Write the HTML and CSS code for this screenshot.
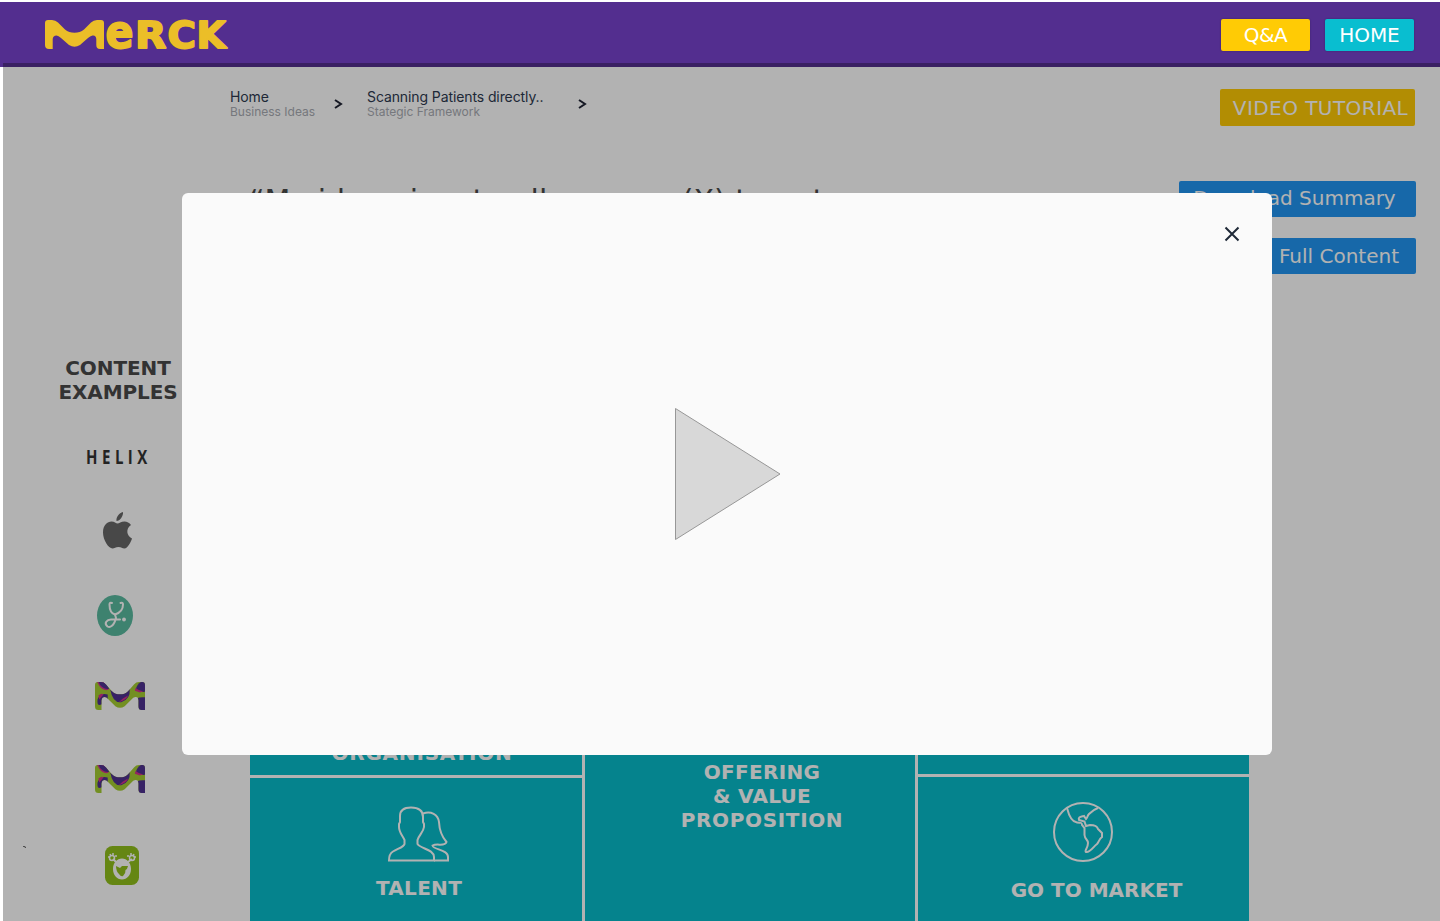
FILE: index.html
```html
<!DOCTYPE html>
<html lang="en">
<head>
<meta charset="utf-8">
<title>Merck – Strategic Framework</title>
<link rel="stylesheet" href="styles.css">
</head>
<body>
<svg class="defs" width="0" height="0" aria-hidden="true">
  <defs>
    <path id="wave" d="M0 3Q0 0 3 0H7Q10.500 0 13 2.500L20 9.500Q24 12.800 29.500 12.800Q35 12.800 39 9.500L46 2.500Q48.500 0 52 0H56Q59 0 59 3V29H55Q51.300 29 51.300 25V19Q51 15 47.500 15.500Q45 16 43 18L35 25Q29.500 28.500 24 25L16 18Q13.500 15.500 11.500 15.500Q8 15.500 7.700 19V29H4Q0 29 0 25Z"/>
    <clipPath id="wave-clip"><use href="#wave"/></clipPath>
    <symbol id="m-mark" viewBox="0 0 59 29" preserveAspectRatio="none">
      <g clip-path="url(#wave-clip)">
        <rect width="59" height="29" fill="#a5cd32"/>
        <path d="M2-1H10L16 8Q10 10 5 4Z" fill="#d4338c"/>
        <path d="M4-1H11L17 7Q11 8 6 3Z" fill="#503291"/>
        <path d="M4 16Q8 11 15 13V18L8 19V23Q2 26 3 18Z" fill="#503291"/>
        <path d="M4 14Q8 11 10 13L5 18Z" fill="#d4338c"/>
        <path d="M18 8Q31 16 41 7Q42 18 31 21Q21 22 18 8Z" fill="#503291"/>
        <path d="M28 21Q37 19 39 14L33 17Z" fill="#d4338c"/>
        <path d="M48 8Q50 0 58-1H60V10Q53 11 48 8Z" fill="#503291"/>
        <path d="M48 6Q51 9 57 9.500L53 11L47 9Z" fill="#d4338c"/>
        <path d="M49 17Q54 15 60 16V30H49Z" fill="#503291"/>
      </g>
    </symbol>
  </defs>
</svg>

<div class="page">
  <header class="topbar">
    <svg class="brand" viewBox="0 0 186 30" width="186" height="30" role="img" aria-label="Merck">
      <use href="#wave"/>
      <text class="brand-e" transform="translate(60.500 27.500) scale(.9 1)">e</text>
      <text class="brand-cap" transform="translate(90 28) scale(1.100 1)">R</text>
      <text class="brand-cap" transform="translate(122.500 27.700) scale(1.050 1)">C</text>
      <text class="brand-cap" transform="translate(151.500 28) scale(1.020 1)">K</text>
    </svg>
    <nav class="topnav">
      <a class="btn btn-qa">Q&amp;A</a>
      <a class="btn btn-home">HOME</a>
    </nav>
  </header>

  <main class="main">
    <aside class="examples">
      <h2 class="examples-title">CONTENT<br>EXAMPLES</h2>
      <div class="helix">HELIX</div>
      <svg class="apple" viewBox="0 0 29 37" width="29" height="37"><path fill="#686868" d="M20 0C20.500 4 17 9 13.500 9C13 5 16 1 20 0ZM14.500 11.500C16 11.500 18 9.500 21.500 9.500C24 9.500 26.500 10.800 28 13C22.500 16.500 23.500 24 29 26.500C28 30 24.500 36.500 21.500 36.500C19 36.500 18.500 35 15.500 35C12.500 35 11.500 36.500 9.500 36.500C5.500 36.500 0 28 0 20.500C0 13 4.500 9.500 8.500 9.500C11.500 9.500 13 11.500 14.500 11.500Z"/></svg>
      <svg class="steth" viewBox="0 0 36 41" width="36" height="41"><ellipse cx="18" cy="20.500" rx="18" ry="20.500" fill="#5abaa0"/><g fill="none" stroke="#fff" stroke-width="2" stroke-linecap="round"><path d="M15 8Q12.500 7 12.500 9.500Q12.500 18 18 19.500Q26 17 26 9.500Q26 7 23.500 8"/><path d="M18 19.500L19 23C17 31 13 33 10.500 31.500C6.500 28 10 24.500 14 24.500H23"/></g><circle cx="27" cy="24.500" r="1.900" fill="#fff"/></svg>
      <svg class="m-logo" width="50" height="28"><use href="#m-mark" width="50" height="28"/></svg>
      <svg class="m-logo m-logo-second" width="50" height="28"><use href="#m-mark" width="50" height="28"/></svg>
      <div class="last-row">
        <svg class="speck" viewBox="0 0 3 2" width="3" height="2"><path d="M0 0L3 1.500" stroke="#444"/></svg>
        <svg class="mindapp" viewBox="0 0 34 39" width="34" height="39"><rect width="34" height="39" rx="7.500" fill="#91c01c"/><path d="M8 13L11 16M27 13L23 16" stroke="#fff" stroke-width="2"/><g fill="none" stroke="#fff" stroke-width="1.500"><circle cx="7" cy="12" r="2.500"/><circle cx="27" cy="12" r="2.500"/><path d="M3 11H5M5 8L6 10M8 7V9M10 10H12M31 11H29M29 8L28 10M26 7V9M24 10H22"/></g><path fill="#fff" fill-rule="evenodd" d="M17 12.500C22 12.500 26 17 26 23C26 29 22 33.500 17 33.500C12 33.500 8 29 8 23C8 17 12 12.500 17 12.500ZM11 20Q11 25 14 28Q16 31 18 30Q21 27 20.500 24Q22.500 23 23 20L17 20L15 22Z"/></svg>
      </div>
    </aside>

    <section class="content">
      <nav class="crumbs">
        <div class="crumb crumb-first"><span class="crumb-name">Home</span><span class="crumb-sub">Business Ideas</span></div>
        <svg class="chev" viewBox="0 0 9 10" width="9" height="10"><path d="M1 1L7 5L1 9"/></svg>
        <div class="crumb crumb-second"><span class="crumb-name crumb-long">Scanning Patients directly..</span><span class="crumb-sub">Stategic Framework</span></div>
        <svg class="chev" viewBox="0 0 9 10" width="9" height="10"><path d="M1 1L7 5L1 9"/></svg>
      </nav>
      <h1 class="idea"><span>“My idea aims to allow</span> <span class="idea-who">users</span> <span>(X) to get</span></h1>
      <div class="board">
        <div class="col">
          <div class="cell cell-org">ORGANISATION</div>
          <div class="cell cell-talent">
            <svg viewBox="0 0 62 56" width="62" height="56" class="line-icon"><path d="M1 54.500C1 50 1.500 47.500 5 45.500C10 42.500 16 41 16.500 38V34C14 29 11 26 11 21V18L12 16V10C12 3 17 1.500 23 1.500C30 1.500 35 4 35 11V16L36 18V21C35.500 26 31 29 29.500 34V38C33 43 45.500 43 46 51V54.500Z"/><path d="M35 7.500C43 5 50 8 51 16C51.500 27 55 32 58.500 36C57 41 49 37 44.500 39.500C45 44 60 43 60 51V54.500H46"/></svg>
            <span class="label label-talent">TALENT</span>
          </div>
        </div>
        <div class="col">
          <div class="cell cell-offer"><span class="offer-line">OFFERING</span><span class="offer-line">&amp; VALUE</span><span class="offer-line offer-wide">PROPOSITION</span></div>
        </div>
        <div class="col">
          <div class="cell cell-blank"></div>
          <div class="cell cell-market">
            <svg viewBox="0 0 60 60" width="60" height="60" class="line-icon globe"><circle cx="30" cy="30" r="29"/><path d="M14 6C16 14 19 20 24 20.500C28 21 29 20 29 23L31.500 26V33C32 38 35 37 35 41C35 46 31 49 33 50C37 51 40 45 44 42C46 40 46 37 49 35V31L45 27C44 23 40 23 37 23L33 24L31.500 19.500L26 18C25 15 27 15 31 14L33 17C35 15 34 14 36 12C39 9 42 7 45 6"/></svg>
            <span class="label label-market">GO TO MARKET</span>
          </div>
        </div>
      </div>
    </section>

    <aside class="actions">
      <a class="btn btn-video">VIDEO TUTORIAL</a>
      <a class="btn btn-dl">Download Summary</a>
      <a class="btn btn-dl btn-full">Download Full Content</a>
    </aside>
  </main>

  <div class="scrim"></div>
  <div class="modal" role="dialog" aria-label="Video">
    <svg class="close" viewBox="0 0 16 16" width="16" height="16"><path d="M1.500 1.500L14.500 14.500M14.500 1.500L1.500 14.500"/></svg>
    <svg class="play" viewBox="0 0 106 133" width="106" height="133"><path d="M.5 .5V131.500L105 66Z"/></svg>
  </div>
</div>
</body>
</html>
```
FILE: styles.css
```css
* { box-sizing: border-box; }
body { margin: 0; background: #fff; font-family: "DejaVu Sans", sans-serif; overflow: hidden; }
.defs { position: absolute; }
.page { position: relative; height: 921px; padding-top: 2px; overflow: hidden; }

.topbar { height: 65px; background: #532e8f; display: flex; align-items: flex-start; justify-content: space-between; padding: 17px 26px 0 45px; }
.brand { margin-top: 1px; fill: #ebbe28; overflow: visible; }
.brand-e, .brand-cap { stroke: #ebbe28; stroke-width: 1.800px; stroke-linejoin: round; }
.brand-e { font: bold 46px "DejaVu Sans", sans-serif; }
.brand-cap { font: bold 37px "DejaVu Sans", sans-serif; }
.topnav { display: flex; gap: 15px; }

.btn { display: flex; align-items: center; justify-content: center; color: #fff; font-size: 20px; line-height: 24px; border-radius: 2px; white-space: nowrap; }
.btn-qa, .btn-home { width: 89px; height: 32px; box-shadow: 0 0 2px rgba(0, 0, 0, .3); }
.btn-qa { background: #ffcb05; letter-spacing: -.5px; }
.btn-home { background: #09bed0; letter-spacing: -.1px; }

.main { display: flex; height: 854px; overflow: hidden; }

.examples { width: 230px; flex: none; padding: 289px 0 0 58px; display: flex; flex-direction: column; align-items: flex-start; }
.examples-title { margin: 0; width: 120px; font-size: 20px; line-height: 24px; text-align: center; color: #4a4a4a; letter-spacing: -.1px; }
.helix { margin: 43px 0 0 28px; height: 20px; font: bold 20px/20px "Open Sans", sans-serif; letter-spacing: 6px; color: #333; transform: scaleX(.75); transform-origin: 0 0; }
.apple { margin: 45px 0 0 45px; }
.steth { margin: 46px 0 0 39px; }
.m-logo { margin: 46px 0 0 37px; }
.m-logo-second { margin-top: 55px; }
.last-row { display: flex; margin: 53px 0 0 -35px; }
.mindapp { margin-left: 79px; }

.content { width: 1019px; flex: none; padding-top: 22px; }
.crumbs { display: flex; height: 36px; font-family: Inter, sans-serif; }
.crumb { display: flex; flex-direction: column; white-space: nowrap; }
.crumb-first { width: 104px; }
.crumb-second { width: 211px; margin-left: 24px; }
.crumb-name { margin-top: -1px; font-size: 14px; line-height: 18px; color: #2e3a50; letter-spacing: -.1px; }
.crumb-sub { font-size: 12px; line-height: 12px; color: #a9acb3; }
.chev { margin-top: 10px; fill: none; stroke: #1f2333; stroke-width: 2; }
.idea { margin: 58px 0 0 19px; height: 36px; font-size: 30px; font-weight: 400; line-height: 36px; white-space: nowrap; color: #4a4a4a; }
.idea-who { letter-spacing: -1.700px; }

.board { margin: 98px 0 0 20px; display: grid; grid-template-columns: 332px 330px 331px; gap: 3px; height: 604px; }
.col { display: flex; flex-direction: column; gap: 3px; }
.cell { background: #08bccb; color: #fff; font-size: 20px; font-weight: 700; line-height: 24px; text-align: center; }
.cell-org { height: 457.500px; padding-top: 424px; padding-left: 12px; letter-spacing: .8px; }
.cell-blank { height: 456.500px; }
.cell-talent, .cell-market { flex: 1; display: flex; flex-direction: column; align-items: center; }
.cell-talent { padding: 28px 0 0 6px; }
.cell-market { padding-top: 25px; }
.cell-offer { flex: 1; padding: 443px 0 0 24px; }
.offer-line { display: block; letter-spacing: .3px; }
.offer-wide { letter-spacing: .65px; }
.line-icon { fill: none; stroke: #fff; stroke-width: 2; }
.globe { margin-right: 2px; }
.label-talent { margin-top: 14px; letter-spacing: .3px; }
.label-market { margin: 16px 0 0 26px; }

.actions { width: 237px; margin-left: -70px; flex: none; padding-top: 22px; display: flex; flex-direction: column; align-items: flex-end; }
.btn-video { width: 195px; height: 37px; margin-right: 1px; padding-left: 6px; background: #ffcb05; letter-spacing: .45px; }
.btn-dl { width: 237px; height: 36px; margin-top: 55px; padding: 0 6px 2px 0; background: #2196f3; }
.btn-full { margin-top: 21px; justify-content: flex-end; padding: 0 17px 0 0; }

.scrim { position: absolute; inset: 63px 0 0 3px; background: rgba(0, 0, 0, .3); }
.modal { position: absolute; left: 182px; top: 193px; width: 1090px; height: 562px; background: #fafafa; border-radius: 6px; display: flex; flex-direction: column; padding: 33px 32px 0 0; }
.close { align-self: flex-end; fill: none; stroke: #1f2937; stroke-width: 2; }
.play { margin: 166px 0 0 493px; fill: #d8d8d8; stroke: #979797; }
```
